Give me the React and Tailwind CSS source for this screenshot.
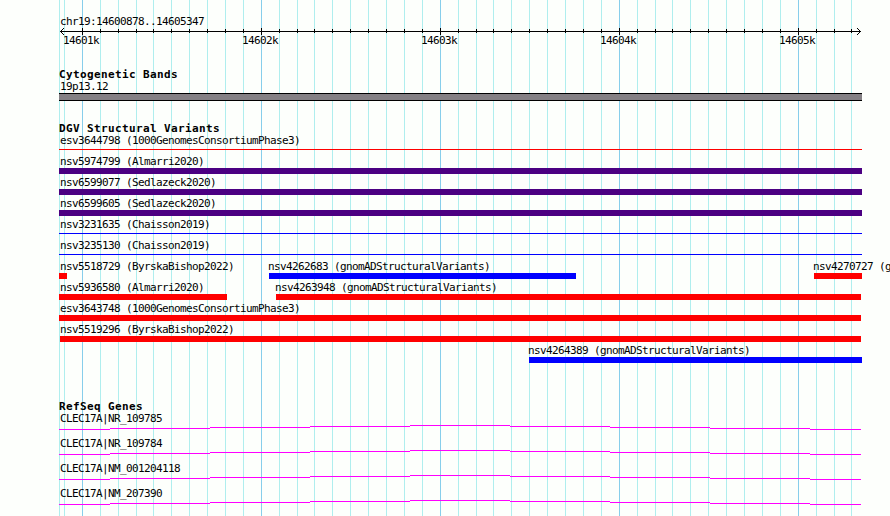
const minorLines = [
  59, 64, 100, 118, 136, 153, 171, 189, 207, 225, 243,
  279, 297, 314, 332, 350, 368, 386, 404, 422,
  458, 476, 493, 511, 529, 547, 565, 583, 601,
  637, 655, 672, 690, 708, 726, 744, 762, 780,
  816, 834, 851,
]
const majorLines = [82, 261, 440, 619, 798]

const scaleLabels = ["14601k", "14602k", "14603k", "14604k", "14605k"]

const colors = {
  red: "bg-[#ff0000]",
  blue: "bg-[#0000ff]",
  purple: "bg-[#4b0082]",
}

// gap = pixels between the previous feature (or the left edge) and this one
const variantRows = [
  [{ name: "esv3644798 (1000GenomesConsortiumPhase3)", color: "red", gap: 0, width: 803, thin: true }],
  [{ name: "nsv5974799 (Almarri2020)", color: "purple", gap: 0, width: 803 }],
  [{ name: "nsv6599077 (Sedlazeck2020)", color: "purple", gap: 0, width: 803 }],
  [{ name: "nsv6599605 (Sedlazeck2020)", color: "purple", gap: 0, width: 803 }],
  [{ name: "nsv3231635 (Chaisson2019)", color: "blue", gap: 0, width: 803, thin: true }],
  [{ name: "nsv3235130 (Chaisson2019)", color: "blue", gap: 0, width: 803, thin: true }],
  [
    { name: "nsv5518729 (ByrskaBishop2022)", color: "red", gap: 0, width: 8 },
    { name: "nsv4262683 (gnomADStructuralVariants)", color: "blue", gap: 202, width: 307 },
    { name: "nsv4270727 (gnomADStructuralVariants)", color: "red", gap: 238, width: 48 },
  ],
  [
    { name: "nsv5936580 (Almarri2020)", color: "red", gap: 0, width: 168 },
    { name: "nsv4263948 (gnomADStructuralVariants)", color: "red", gap: 49, width: 585 },
  ],
  [{ name: "esv3643748 (1000GenomesConsortiumPhase3)", color: "red", gap: 0, width: 802 }],
  [{ name: "nsv5519296 (ByrskaBishop2022)", color: "red", gap: 1, width: 801 }],
  [{ name: "nsv4264389 (gnomADStructuralVariants)", color: "blue", gap: 470, width: 333 }],
]

const genes = ["CLEC17A|NR_109785", "CLEC17A|NR_109784", "CLEC17A|NM_001204118", "CLEC17A|NM_207390"]

// [x, y, width] of every step of the intron line
const intronSteps = [
  [0, 4, 51], [51, 3, 100], [151, 2, 100], [251, 1, 100], [351, 0, 100],
  [451, 1, 100], [551, 2, 100], [651, 3, 100], [751, 4, 51],
]

const GridLines = () => (
  <svg className="absolute inset-0" width="890" height="516" shapeRendering="crispEdges">
    {minorLines.map((x) => (
      <rect key={x} x={x} y="0" width="1" height="516" fill="#afeeee" />
    ))}
    {majorLines.map((x) => (
      <rect key={x} x={x} y="0" width="1" height="516" fill="#87ceeb" />
    ))}
  </svg>
)

const Ruler = () => (
  <svg className="block" width="831" height="8" viewBox="59 28 831 8" shapeRendering="crispEdges">
    <rect x="60" y="31" width="801" height="1" />
    {minorLines.slice(2).map((x) => (
      <rect key={x} x={x} y="29" width="1" height="4" />
    ))}
    {majorLines.map((x) => (
      <rect key={x} x={x} y="28" width="1" height="7" />
    ))}
    {[1, 2, 3].map((d) => (
      <g key={d}>
        <rect x={60 + d} y={31 - d} width="1" height="1" />
        <rect x={60 + d} y={31 + d} width="1" height="1" />
        <rect x={860 - d} y={31 - d} width="1" height="1" />
        <rect x={860 - d} y={31 + d} width="1" height="1" />
      </g>
    ))}
  </svg>
)

const TrackTitle = ({ children }) => (
  <h2 className="h-[12px] leading-[14px] font-bold tracking-[0.38px] whitespace-pre">{children}</h2>
)

const Feature = ({ feature }) => (
  <div className="shrink-0" style={{ marginLeft: feature.gap, width: feature.width }}>
    <div className={`h-[15px] leading-[17px] ${feature.gap > 1 ? "-ml-px" : feature.gap === 1 ? "" : "pl-px"}`}>
      {feature.name}
    </div>
    <div className="flex h-[6px] flex-col">
      <div className={`${colors[feature.color]} ${feature.thin ? "mt-[2px] h-px" : "h-[6px]"}`} />
    </div>
  </div>
)

const Gene = ({ name }) => (
  <div className="h-[25px]">
    <div className="h-[15px] pl-px leading-[17px]">{name}</div>
    <svg className="block" width="803" height="5" shapeRendering="crispEdges">
      {intronSteps.map(([x, y, width]) => (
        <rect key={x} x={x} y={y} width={width} height="1" fill="#ff00ff" />
      ))}
    </svg>
  </div>
)

const App = () => {
  return (
    <div className="relative h-[516px] w-[890px] overflow-hidden bg-[#fdfffc] font-['DejaVu_Sans_Mono',monospace] text-[11px] tracking-[-0.62px] whitespace-nowrap text-black">
      <GridLines />
      <div className="relative pt-[13px] pl-[59px]">
        <div className="h-[15px] pl-px leading-[17px]">chr19:14600878..14605347</div>
        <Ruler />
        <div className="flex h-[10px] pl-[4px] leading-[10px]">
          {scaleLabels.map((label) => (
            <span key={label} className="w-[179px] shrink-0">{label}</span>
          ))}
        </div>

        <section className="mt-[22px]">
          <TrackTitle>Cytogenetic Bands</TrackTitle>
          <div className="h-[13px] pl-px leading-[13px]">19p13.12</div>
          <div className="h-[8px] w-[803px] border-y border-black bg-[#848084]" />
        </section>

        <section className="mt-[21px]">
          <TrackTitle>DGV Structural Variants</TrackTitle>
          <div className="-mt-[2px]">
            {variantRows.map((row) => (
              <div key={row[0].name} className="flex h-[21px]">
                {row.map((feature) => (
                  <Feature key={feature.name} feature={feature} />
                ))}
              </div>
            ))}
          </div>
        </section>

        <section className="mt-[37px]">
          <TrackTitle>RefSeq Genes</TrackTitle>
          <div className="-mt-[2px]">
            {genes.map((name) => (
              <Gene key={name} name={name} />
            ))}
          </div>
        </section>
      </div>
    </div>
  )
}

export default App
